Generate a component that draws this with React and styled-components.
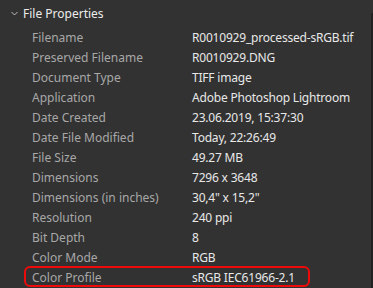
import React from "react";
import styled, { createGlobalStyle } from "styled-components";

const Global = createGlobalStyle`
  html, body { margin: 0; padding: 0; background: #323232; }
  body { width: 373px; height: 288px; overflow: hidden; }
`;

const Page = styled.div`
  display: flex;
  width: 373px;
  height: 288px;
  background: #323232;
  font-family: "Noto Sans", "Segoe UI", sans-serif;
  font-size: 12px;
  overflow: hidden;
`;

const Panel = styled.div`
  flex: 1;
  display: flex;
  flex-direction: column;
`;

const Scrollbar = styled.div`
  width: 2px;
  margin-top: 13px;
  background: #222222;
`;

const Header = styled.div`
  height: 27px;
  display: flex;
  align-items: center;
  padding-left: 11px;
  gap: 5px;
  color: #ececec;
  font-size: 12px;
`;

const Row = styled.div`
  position: relative;
  height: 20px;
  display: flex;
  align-items: center;
  white-space: nowrap;
  &::after {
    content: "";
    display: ${(p) => (p.$highlight ? "block" : "none")};
    position: absolute;
    left: 24px;
    top: -1px;
    width: 286px;
    height: 21px;
    box-sizing: border-box;
    border: 2px solid #ee0a0a;
    border-radius: 6px;
  }
`;

const Label = styled.span`
  width: 160px;
  padding-left: 32px;
  box-sizing: content-box;
  flex: none;
  color: #a8a8a8;
`;

const Value = styled.span`
  color: #e8e8e8;
  letter-spacing: -0.2px;
`;

const rows = [
  ["Filename", "R0010929_processed-sRGB.tif"],
  ["Preserved Filename", "R0010929.DNG"],
  ["Document Type", "TIFF image"],
  ["Application", "Adobe Photoshop Lightroom"],
  ["Date Created", "23.06.2019, 15:37:30"],
  ["Date File Modified", "Today, 22:26:49"],
  ["File Size", "49.27 MB"],
  ["Dimensions", "7296 x 3648"],
  ["Dimensions (in inches)", "30,4\" x 15,2\""],
  ["Resolution", "240 ppi"],
  ["Bit Depth", "8"],
  ["Color Mode", "RGB"],
  ["Color Profile", "sRGB IEC61966-2.1"],
];

export default function App() {
  return (
    <Page>
      <Global />
      <Panel>
        <Header>
          <svg width="7" height="5" viewBox="0 0 7 5">
            <path d="M0.5 1 L3.5 4 L6.5 1" fill="none" stroke="#bdbdbd" strokeWidth="1" />
          </svg>
          <span>File Properties</span>
        </Header>
        {rows.map(([l, v], i) => (
          <Row key={l} $highlight={i === rows.length - 1}>
            <Label>{l}</Label>
            <Value>{v}</Value>
          </Row>
        ))}
      </Panel>
      <Scrollbar />
    </Page>
  );
}
